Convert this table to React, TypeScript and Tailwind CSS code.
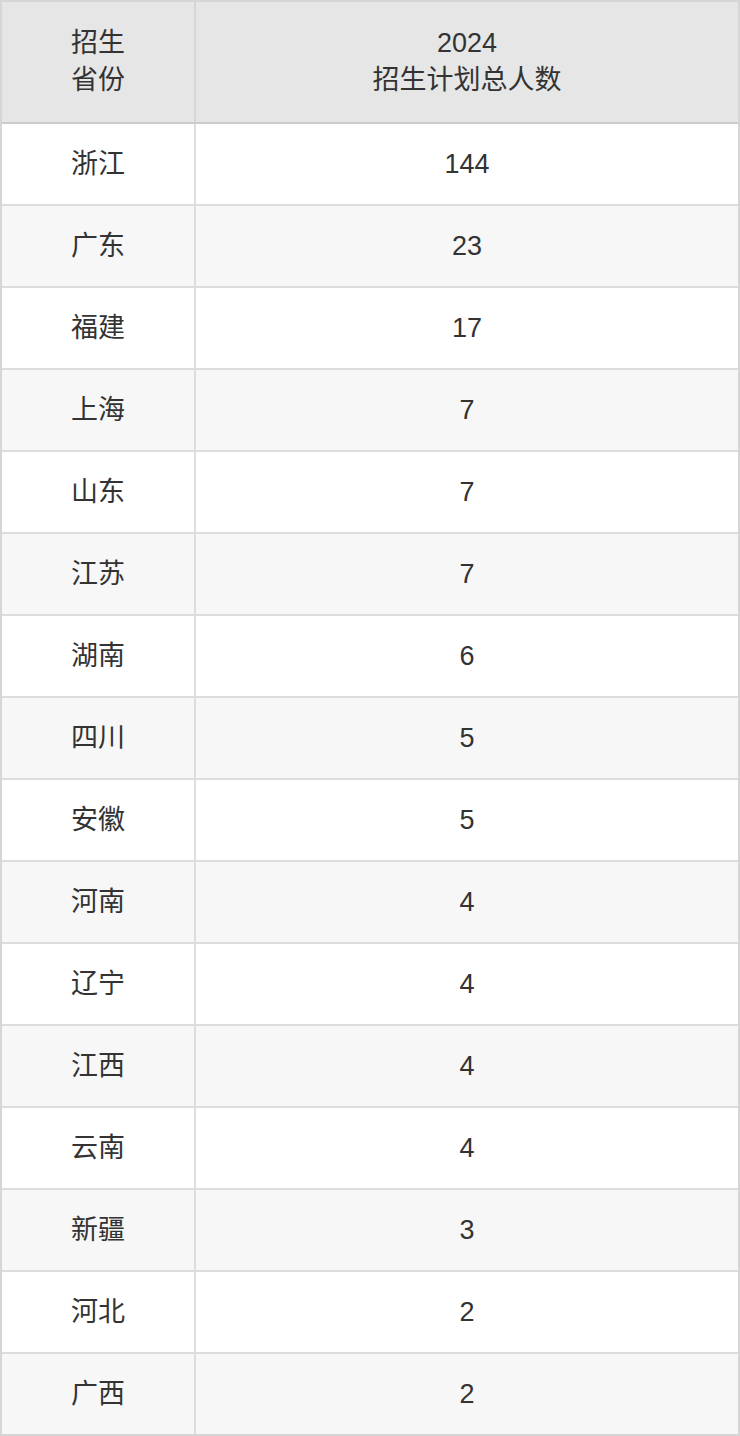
const rows: [string, string][] = [
  ['浙江', '144'],
  ['广东', '23'],
  ['福建', '17'],
  ['上海', '7'],
  ['山东', '7'],
  ['江苏', '7'],
  ['湖南', '6'],
  ['四川', '5'],
  ['安徽', '5'],
  ['河南', '4'],
  ['辽宁', '4'],
  ['江西', '4'],
  ['云南', '4'],
  ['新疆', '3'],
  ['河北', '2'],
  ['广西', '2']
];

export default function App() {
  return (
    <div
      className="w-[740px] border-2 border-[#d6d6d6] text-[27px] leading-[37px] text-[#333333]"
      style={{ fontFamily: '"Liberation Sans", "Noto Sans CJK SC", sans-serif' }}
    >
      <div className="flex h-[122px] border-b-2 border-[#cccccc] bg-[#e6e6e6]">
        <div className="flex w-[194px] flex-col items-center justify-center border-r-2 border-[#d6d6d6]">
          <span>招生</span>
          <span>省份</span>
        </div>
        <div className="flex flex-1 flex-col items-center justify-center">
          <span>2024</span>
          <span>招生计划总人数</span>
        </div>
      </div>
      {rows.map(([prov, n], i) => (
        <div
          key={prov + i}
          className={`flex h-[82px] border-[#dddddd] last:h-[80px] last:border-b-0 border-b-2 ${i % 2 === 1 ? 'bg-[#f7f7f7]' : 'bg-white'}`}
        >
          <div className="flex w-[194px] items-center justify-center border-r-2 border-[#dddddd]">{prov}</div>
          <div className="flex flex-1 items-center justify-center">{n}</div>
        </div>
      ))}
    </div>
  );
}
